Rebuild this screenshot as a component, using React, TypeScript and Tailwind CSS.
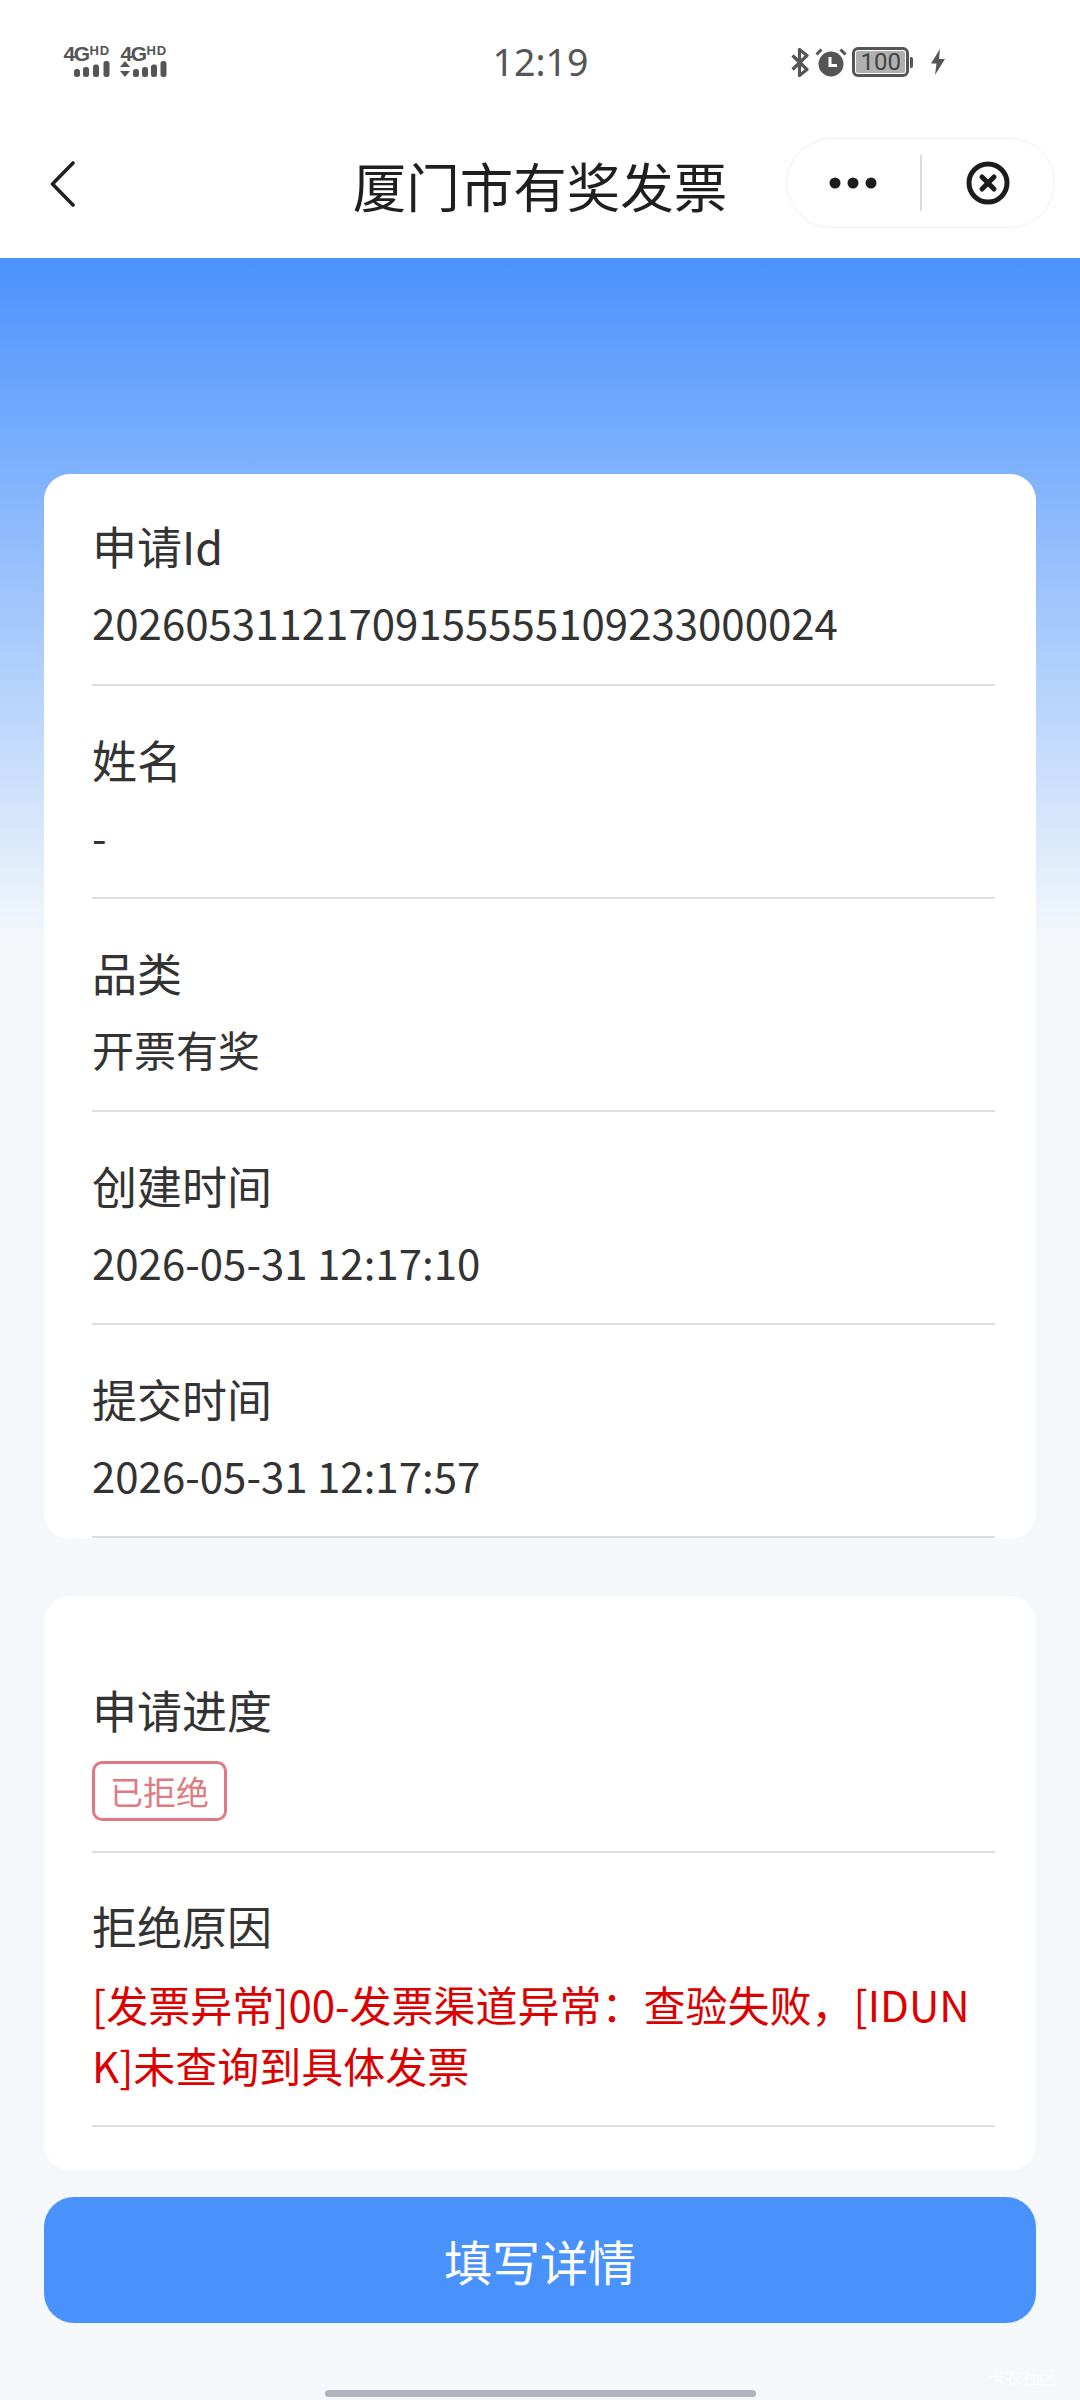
import React from "react";

const cjk = "font-['Noto_Sans_CJK_SC','Noto_Sans',sans-serif]";

function Signal({ arrows }: { arrows?: boolean }) {
  return (
    <div className="flex flex-col items-end w-[47px] h-[32px]">
      <div className="flex items-start h-[15px] font-['Liberation_Sans',sans-serif] font-bold text-[#555555] leading-none">
        <span className="text-[21px] tracking-[-1.5px] leading-[15px]">4G</span>
        <span className="text-[13px] leading-[9px] tracking-[0.8px] ml-[1px]">HD</span>
      </div>
      <svg width="47" height="17" viewBox="0 0 47 17" className="block" fill="#555555">
        {arrows && (
          <>
            <path d="M5 0l5 6H0z" />
            <path d="M5 16l5-6H0z" />
          </>
        )}
        <rect x={arrows ? 13 : 11} y="8" width="6" height="8" rx="2.5" />
        <rect x={arrows ? 22 : 20} y="6" width="6" height="10" rx="2.5" />
        <rect x={arrows ? 31 : 30} y="3.5" width="6" height="12.5" rx="2.5" />
        <rect x="40.5" y="0" width="6" height="16" rx="2.5" />
      </svg>
    </div>
  );
}

function Row({ label, children, className = "" }: { label: string; children: React.ReactNode; className?: string }) {
  return (
    <div className={`border-b-2 border-[#dedede] ${className}`}>
      <div className="text-[45px] leading-[61px] text-[#333333]">{label}</div>
      {children}
    </div>
  );
}

function Value({ children }: { children: React.ReactNode }) {
  return <div className="mt-[15px] text-[42px] leading-[61px] text-[#333333]">{children}</div>;
}

export default function App() {
  return (
    <div className={`w-[1080px] h-[2400px] overflow-hidden relative bg-[#f4f8fb] ${cjk}`}>
      <div className="bg-white">
        <div className="h-[124px] flex items-center pl-[63px] pr-[135px] justify-between">
          <div className="flex gap-[10px] w-[230px]">
            <Signal />
            <Signal arrows />
          </div>
          <div className="text-[37.5px] leading-none text-[#555555] font-['Noto_Sans',sans-serif] -ml-[3px] -mt-[1px]">12:19</div>
          <div className="flex items-center w-[154px] justify-between">
            <svg width="18" height="29" viewBox="0 0 18 29" fill="none" stroke="#555555" strokeWidth="3.2" strokeLinejoin="round">
              <path d="M1.5 7.5l14.5 14-7.5 6V1.5l7.5 6-14.5 14" />
            </svg>
            <svg width="32" height="30" viewBox="0 0 32 30" fill="none">
              <circle cx="16" cy="17" r="12.5" fill="#555555" />
              <path d="M15 10v8.5h7" stroke="#ffffff" strokeWidth="3" />
              <path d="M1.5 7.5l5-5M30.5 7.5l-5-5" stroke="#555555" strokeWidth="3" />
            </svg>
            <div className="flex items-center">
              <div className="w-[57px] h-[30px] rounded-[6px] border-[3px] border-[#555555] p-[1px]">
                <div className="w-full h-full bg-[#b0b0b0] rounded-[2px] flex items-center justify-center text-[24px] leading-none text-[#444444] font-['Roboto',sans-serif]">
                  100
                </div>
              </div>
              <div className="w-[3px] h-[11px] bg-[#555555] rounded-r-[2px] ml-[1px]" />
            </div>
            <svg width="14" height="26" viewBox="0 0 14 26" fill="#555555" className="ml-[12px]">
              <path d="M9 0L0 14.5h5.5L4 26l10-16H8z" />
            </svg>
          </div>
        </div>
        <div className="h-[134px] grid grid-cols-[1fr_auto_1fr] items-center pb-[12px]">
          <div className="pl-[50px]">
            <svg width="25" height="46" viewBox="0 0 25 46" fill="none" stroke="#222222" strokeWidth="3.6" strokeLinecap="round" strokeLinejoin="round" className="block -mt-[2px]">
              <path d="M23 2L2.5 23 23 44" />
            </svg>
          </div>
          <div className="text-[53.5px] leading-[70px] text-[#1f1f1f]">厦门市有奖发票</div>
          <div className="flex justify-end pr-[25px]">
            <div className="w-[269px] h-[90px] rounded-full border border-[#f0f0f0] bg-white flex items-center -mt-[5px]">
              <div className="flex-1 flex justify-center">
                <svg width="48" height="12" viewBox="0 0 48 12" fill="#1c1c1c" className="block">
                  <circle cx="6" cy="6" r="5.5" />
                  <circle cx="24" cy="6" r="5.5" />
                  <circle cx="42" cy="6" r="5.5" />
                </svg>
              </div>
              <div className="w-[2px] h-[56px] bg-[#dcdcdc]" />
              <div className="flex-1 flex justify-center">
                <svg width="44" height="44" viewBox="0 0 44 44" fill="none" stroke="#1c1c1c" className="block">
                  <circle cx="22" cy="22" r="19" strokeWidth="5" />
                  <path d="M16 16l12 12M28 16L16 28" strokeWidth="5" strokeLinecap="round" />
                </svg>
              </div>
            </div>
          </div>
        </div>
      </div>

      <div className="px-[44px] pt-[216px] bg-[linear-gradient(180deg,#4a92fd_0,#f4f8fb_682px)]">
        <div className="bg-white rounded-[26px] pl-[48px] pr-[41px] h-[1065px]">
          <Row label="申请Id" className="pt-[41px] h-[212px]">
            <Value>20260531121709155555109233000024</Value>
          </Row>
          <Row label="姓名" className="pt-[43px] h-[213px]">
            <Value>-</Value>
          </Row>
          <Row label="品类" className="pt-[43px] h-[213px]">
            <Value>开票有奖</Value>
          </Row>
          <Row label="创建时间" className="pt-[43px] h-[213px]">
            <Value>2026-05-31 12:17:10</Value>
          </Row>
          <Row label="提交时间" className="pt-[43px] h-[213px]">
            <Value>2026-05-31 12:17:57</Value>
          </Row>
        </div>

        <div className="mt-[57px] bg-white rounded-[26px] pl-[48px] pr-[41px] pb-[43px]">
          <Row label="申请进度" className="pt-[83px] pb-[30px]">
            <div className="mt-[21px] w-[135px] h-[60px] rounded-[10px] border-[3px] border-[#e07a80] flex items-center justify-center text-[33px] leading-none text-[#e07a80]">
              已拒绝
            </div>
          </Row>
          <Row label="拒绝原因" className="pt-[42px] pb-[30px]">
            <div className="mt-[17px] text-[42px] leading-[61px] text-[#dd0000] break-all">
              [发票异常]00-发票渠道异常：查验失败，[IDUNK]未查询到具体发票
            </div>
          </Row>
        </div>

        <div className="mt-[27px] h-[126px] rounded-[30px] bg-[#4a92fb] flex items-center justify-center text-[48px] leading-none text-white">
          填写详情
        </div>

        <div className="mt-[67px] mx-auto w-[431px] h-[7px] rounded-full bg-[#b0b4bb]" />
      </div>

      <div className="absolute right-[24px] bottom-[15px] text-[17px] leading-none text-white/70">卡农社区</div>
    </div>
  );
}
